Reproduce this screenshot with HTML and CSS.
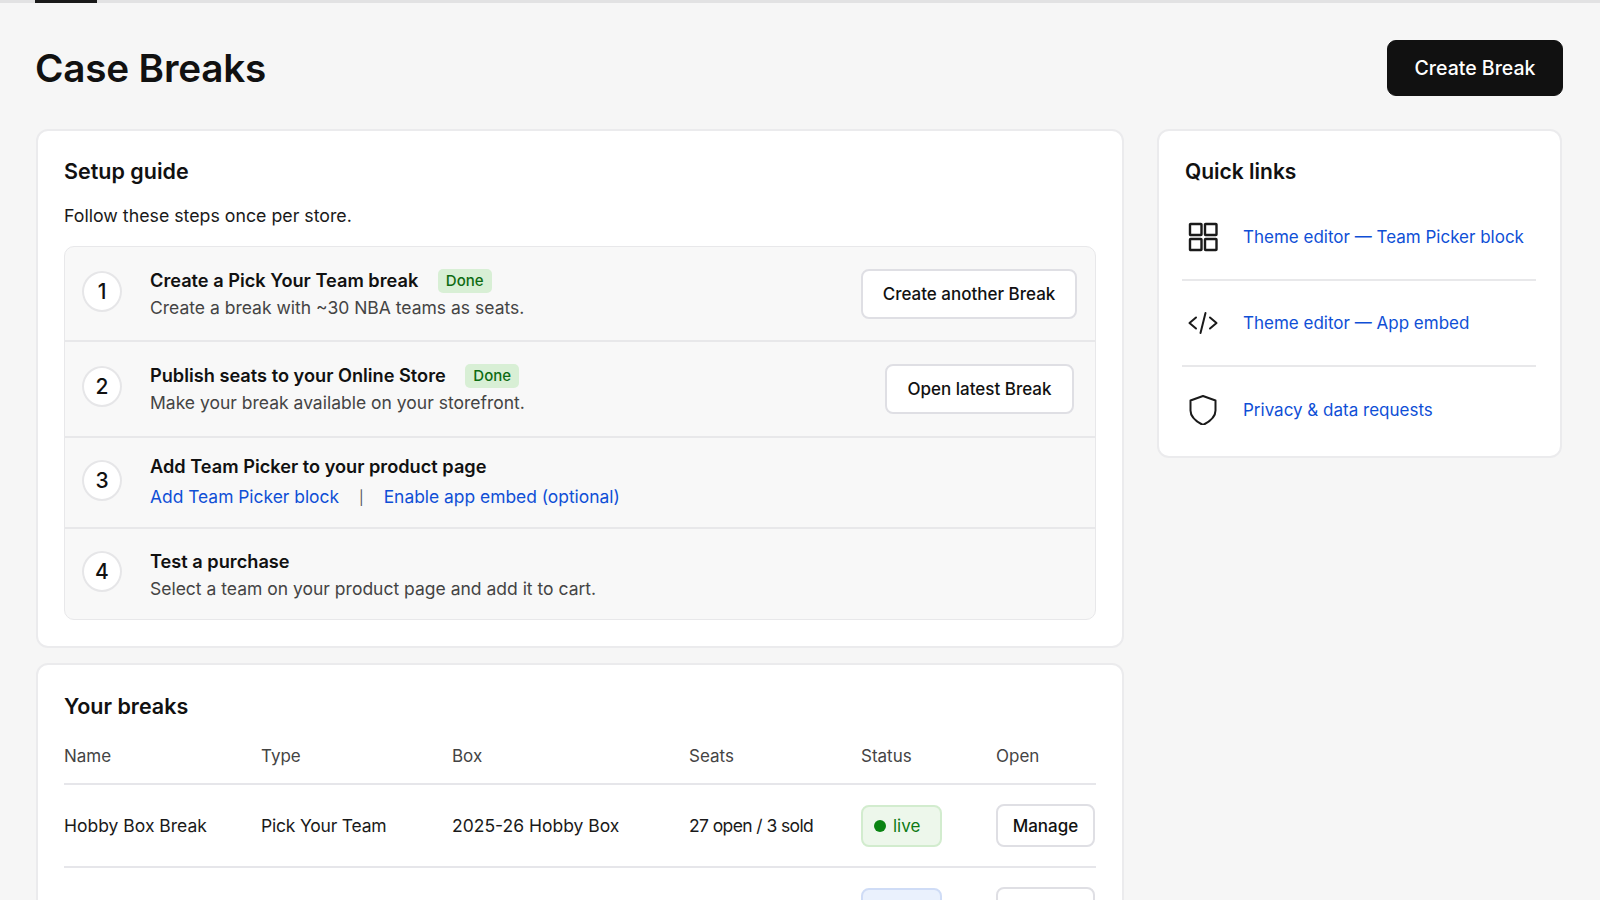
FILE: index.html
```html
<!DOCTYPE html>
<html lang="en">
<head>
<meta charset="utf-8">
<title>Case Breaks</title>
<link rel="stylesheet" href="styles.css">
</head>
<body>
<div class="topbar"><span class="topbar-tab"></span></div>
<div class="page">
  <header class="page-head">
    <h1>Case Breaks</h1>
    <button class="btn-primary">Create Break</button>
  </header>
  <div class="layout">
    <main class="main-col">
      <section class="card setup">
        <h2>Setup guide</h2>
        <p class="intro">Follow these steps once per store.</p>
        <ol class="steps">
          <li class="step step-1">
            <span class="num">1</span>
            <div class="step-body">
              <div class="step-title">Create a Pick Your Team break <span class="done">Done</span></div>
              <div class="step-desc">Create a break with ~30 NBA teams as seats.</div>
            </div>
            <button class="btn btn-a">Create another Break</button>
          </li>
          <li class="step step-2">
            <span class="num">2</span>
            <div class="step-body">
              <div class="step-title">Publish seats to your Online Store <span class="done">Done</span></div>
              <div class="step-desc">Make your break available on your storefront.</div>
            </div>
            <button class="btn btn-b">Open latest Break</button>
          </li>
          <li class="step step-3">
            <span class="num">3</span>
            <div class="step-body">
              <div class="step-title">Add Team Picker to your product page</div>
              <div class="step-links"><a href="#">Add Team Picker block</a><span class="sep">|</span><a href="#">Enable app embed (optional)</a></div>
            </div>
          </li>
          <li class="step step-4">
            <span class="num">4</span>
            <div class="step-body">
              <div class="step-title">Test a purchase</div>
              <div class="step-desc">Select a team on your product page and add it to cart.</div>
            </div>
          </li>
        </ol>
      </section>
      <section class="card breaks">
        <h2>Your breaks</h2>
        <table>
          <thead>
            <tr><th class="c1">Name</th><th class="c2">Type</th><th class="c3">Box</th><th class="c4">Seats</th><th class="c5">Status</th><th class="c6">Open</th></tr>
          </thead>
          <tbody>
            <tr>
              <td>Hobby Box Break</td><td class="type">Pick Your Team</td><td>2025-26 Hobby Box</td><td class="seats">27 open / 3 sold</td>
              <td><span class="status live"><i class="dot"></i>live</span></td>
              <td><button class="btn btn-sm">Manage</button></td>
            </tr>
            <tr>
              <td></td><td></td><td></td><td></td>
              <td><span class="status draft"></span></td>
              <td><span class="btn btn-sm btn-empty"></span></td>
            </tr>
          </tbody>
        </table>
      </section>
    </main>
    <aside class="card links">
      <h2>Quick links</h2>
      <ul class="link-list">
        <li>
          <svg class="ico" viewBox="0 0 30 30" fill="none" stroke="#1a1a1a" stroke-width="2.400"><rect x="2" y="2" width="11.500" height="11" rx=".6"/><rect x="17" y="2" width="11.500" height="11" rx=".6"/><rect x="2" y="17" width="11.500" height="11" rx=".6"/><rect x="17" y="17" width="11.500" height="11" rx=".6"/></svg>
          <a href="#">Theme editor — Team Picker block</a>
        </li>
        <li>
          <svg class="ico" viewBox="0 0 30 30" fill="none" stroke="#1a1a1a" stroke-width="2" stroke-linecap="round" stroke-linejoin="round"><path d="M8 9.500 1.500 15 8 20.500"/><path d="M22 9.500 28.500 15 22 20.500"/><path d="M17.500 5 12.500 25"/></svg>
          <a href="#">Theme editor — App embed</a>
        </li>
        <li>
          <svg class="ico" viewBox="0 0 30 30" fill="none" stroke="#1a1a1a" stroke-width="2" stroke-linejoin="round"><path d="M15 1 27.500 5.500V15.500C27.500 22 22 26.500 15 30 8 26.500 2.500 22 2.500 15.500V5.500Z"/></svg>
          <a href="#">Privacy &amp; data requests</a>
        </li>
      </ul>
    </aside>
  </div>
</div>
</body>
</html>
```
FILE: styles.css
```css
* { box-sizing: border-box; }
html, body { height: 900px; overflow: hidden; }
body {
  margin: 0;
  background: #f6f6f6;
  color: #111;
  font-family: Inter, "Liberation Sans", sans-serif;
  font-size: 17.5px;
}
.topbar { height: 3px; background: #e2e2e3; padding-left: 35px; }
.topbar-tab { display: block; width: 62px; height: 3px; background: #1a1a1a; }
.page { padding: 0 36px; }
.page-head {
  display: flex;
  justify-content: space-between;
  align-items: center;
  height: 126px;
  padding-top: 3px;
}
h1 { margin: 0 0 0 -1px; font-size: 38.7px; font-weight: 600; letter-spacing: -.2px; color: #111; }
.btn-primary {
  width: 176px;
  height: 56px;
  margin-right: 1px;
  background: #111;
  color: #fff;
  border: 1px solid #111;
  border-radius: 9px;
  font: 500 19.5px Inter, sans-serif;
}
.layout { display: grid; grid-template-columns: 1088px 405px; gap: 33px; align-items: start; }
.main-col { display: flex; flex-direction: column; gap: 15px; }
.card {
  background: #fff;
  border: 2px solid #ebebed;
  border-radius: 12px;
  padding: 26px;
}
h2 { margin: 0; font-size: 21.5px; font-weight: 600; line-height: 30px; color: #111; }
.setup { height: 519px; padding-top: 25px; }
.intro { margin: 17px 0 17px; font-size: 17.75px; line-height: 26px; color: #1a1a1a; }
.steps {
  list-style: none;
  margin: 0;
  padding: 0;
  background: #f8f8f8;
  border: 1px solid #e8e8ea;
  border-radius: 10px;
}
.step {
  display: flex;
  align-items: center;
  padding: 0 17px;
  border-bottom: 2px solid #e8e8ea;
}
.step:last-child { border-bottom: 0; }
.step-1 { height: 95px; }
.step-2 { height: 96px; }
.step-3 { height: 91px; }
.step-4 { height: 90px; }
.num {
  flex: none;
  width: 40px;
  height: 41px;
  margin: 0 28px 5px 0;
  border: 2px solid #e6e6e8;
  border-radius: 50%;
  background: #fff;
  display: flex;
  align-items: center;
  justify-content: center;
  font-size: 21px;
  font-weight: 500;
}
.step-body { flex: 1; }
.step-3 .step-body { padding-top: 1px; }
.step-4 .step-body { padding-top: 2px; }
.step-title { font-size: 18.2px; font-weight: 600; line-height: 28px; color: #111; }
.step-desc { font-size: 17.5px; line-height: 28px; color: #444; }
.step-links { font-size: 17.4px; line-height: 33px; }
.step-links a { color: #0f4fd6; text-decoration: none; }
.sep { margin: 0 20px; color: #555; font-size: 14px; }
.done {
  display: inline-block;
  margin-left: 15px;
  padding: 0 8px;
  height: 24px;
  line-height: 24px;
  border-radius: 5px;
  background: #d8efd5;
  color: #0e6b12;
  font-size: 15px;
  font-weight: 500;
  vertical-align: 1px;
}
.btn {
  background: #fff;
  border: 2px solid #dfdfe4;
  border-radius: 8px;
  color: #111;
  font: 450 17px Inter, sans-serif;
  height: 50px;
}
.btn-a { width: 216px; margin-right: 1px; }
.btn-b { width: 189px; margin-right: 4px; }
.btn-sm { width: 99px; height: 43px; }
.btn-empty { display: block; }
.breaks { padding-bottom: 0; }
table { width: 100%; border-collapse: collapse; table-layout: fixed; margin-top: 8px; font-size: 17.5px; }
th { font-weight: 400; font-size: 17px; text-align: left; color: #444; height: 55px; padding: 0; border-bottom: 2px solid #e6e6ea; }
td { height: 83px; padding: 0; color: #1a1a1a; border-bottom: 2px solid #e6e6ea; }
.type { letter-spacing: -.2px; }
.seats { letter-spacing: -.6px; }
.c1 { width: 197px; }
.c2 { width: 191px; }
.c3 { width: 237px; }
.c4 { width: 172px; }
.c5 { width: 135px; }
.status {
  display: flex;
  align-items: center;
  width: 81px;
  height: 42px;
  padding-left: 11px;
  border-radius: 8px;
  font-size: 17px;
}
.dot { width: 12px; height: 12px; border-radius: 50%; margin-right: 7px; }
.live { background: #edf7eb; border: 2px solid #d2ecce; color: #0e7a14; }
.live .dot { background: #0a8412; }
.draft { background: #eaf1fd; border: 2px solid #cfdcf6; }
.links { height: 329px; padding: 26px 24px 0 26px; }
.links h2 { font-size: 21px; }
.link-list { list-style: none; margin: 8px 0 0 -3px; padding: 0; }
.link-list li {
  display: flex;
  align-items: center;
  height: 86px;
  padding-left: 6px;
  border-bottom: 2px solid #e8e8ea;
}
.link-list li:last-child { border-bottom: 0; }
.ico { width: 30px; height: 30px; flex: none; margin-right: 25px; }
.link-list a { color: #0f4fd6; text-decoration: none; font-size: 17px; white-space: nowrap; }
```
